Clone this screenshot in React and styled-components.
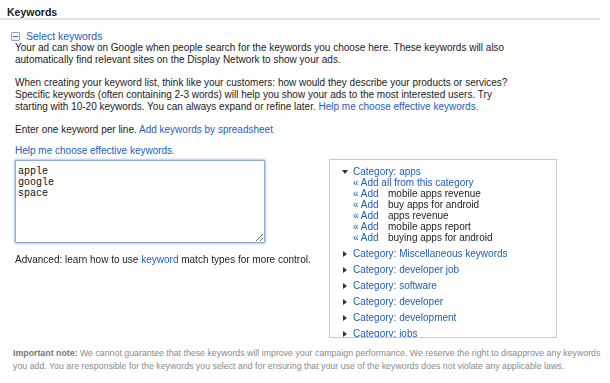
import React, { useEffect, useRef } from "react";
import styled, { createGlobalStyle } from "styled-components";

const GlobalStyle = createGlobalStyle`
  html, body {
    margin: 0;
    padding: 0;
    background: #ffffff;
  }
  body {
    font-family: "Liberation Sans", Arial, Helvetica, sans-serif;
    font-size: 10px;
    color: #222;
  }
`;

const Page = styled.div`
  width: 610px;
  height: 383px;
  overflow: hidden;
`;

const Header = styled.h2`
  width: 593px;
  margin: 0;
  padding: 7px 0 0 7px;
  font-size: 10.5px;
  line-height: 11px;
  font-weight: bold;
  color: #1a1a1a;
  border-bottom: 2px solid #e4e4e4;
`;

const Toggle = styled.div`
  display: flex;
  align-items: center;
  gap: 6px;
  margin: 10px 0 0 11px;
  line-height: 12px;
`;

const MinusBox = styled.span`
  position: relative;
  width: 7px;
  height: 7px;
  border: 1px solid #95a3b6;
  border-radius: 1px;
  background: linear-gradient(#fff, #e6ebf3);
  &:after {
    content: "";
    position: absolute;
    left: 1px;
    right: 1px;
    top: 3px;
    height: 1px;
    background: #506f9c;
  }
`;

const Link = styled.a`
  color: #1f5bc4;
  text-decoration: none;
  cursor: pointer;
  font-size: ${(p) => p.size || "inherit"};
`;

const Body = styled.div`
  padding-left: 15px;
`;

const Para = styled.p`
  width: 560px;
  margin: ${(p) => p.top || "11px"} 0 0;
  line-height: 12px;
`;

const Row = styled.div`
  display: flex;
  align-items: flex-start;
  margin-top: 2px;
`;

const LeftCol = styled.div`
  width: 314px;
  padding-top: 1px;
`;

const Box = styled.textarea`
  display: block;
  box-sizing: border-box;
  width: 250px;
  height: 83px;
  margin: 0;
  padding: 5px 2px;
  resize: both;
  font-family: "Liberation Mono", "Courier New", monospace;
  font-size: 10px;
  line-height: 11px;
  color: #111;
  border: 1px solid #8fa9d9;
  border-radius: 1px;
  box-shadow: 0 0 2px 1px #b3c8ee;
  outline: none;
`;

const Note = styled.div`
  margin-top: 11px;
  line-height: 12px;
`;

const Panel = styled.div`
  box-sizing: border-box;
  width: 228px;
  height: 179px;
  overflow: hidden;
  border: 1px solid #cacaca;
  padding: 6px 0 0 12px;
`;

const CatList = styled.ul`
  list-style: none;
  margin: 0;
  padding: 0;
`;

const Cat = styled.li`
  margin-bottom: 5px;
  line-height: 11px;
`;

const CatHead = styled.div`
  display: flex;
  align-items: center;
`;

const Arrow = styled.span`
  display: inline-block;
  width: 11px;
  flex: none;
  &:before {
    content: "";
    display: block;
    width: 0;
    height: 0;
    ${(p) =>
      p.open
        ? `border-left: 3px solid transparent;
           border-right: 3px solid transparent;
           border-top: 4px solid #333;`
        : `margin-left: 1px;
           border-top: 3px solid transparent;
           border-bottom: 3px solid transparent;
           border-left: 4px solid #333;`}
  }
`;

const SubList = styled.div`
  padding-left: 11px;
  line-height: 11px;
`;

const SubRow = styled.div`
  display: flex;
`;

const AddLink = styled(Link)`
  width: 35px;
  flex: none;
`;

const Footnote = styled.p`
  width: 597px;
  margin: 9px 0 0 13px;
  font-size: 8.8px;
  line-height: 13px;
  color: #8a8a8a;
  & b {
    color: #777;
  }
`;

const keywords = [
  "mobile apps revenue",
  "buy apps for android",
  "apps revenue",
  "mobile apps report",
  "buying apps for android",
];

const categories = [
  "Miscellaneous keywords",
  "developer job",
  "software",
  "developer",
  "development",
  "jobs",
];

export default function App() {
  const area = useRef();

  useEffect(() => {
    const el = area.current;
    if (el) {
      el.focus();
      el.setSelectionRange(el.value.length, el.value.length);
    }
  }, []);

  return (
    <Page>
      <GlobalStyle />
      <Header>Keywords</Header>
      <Toggle>
        <MinusBox />
        <Link size="10.5px">Select keywords</Link>
      </Toggle>
      <Body>
        <Para top="0">
          Your ad can show on Google when people search for the keywords you
          choose here. These keywords will also
          <br />
          automatically find relevant sites on the Display Network to show your
          ads.
        </Para>
        <Para>
          When creating your keyword list, think like your customers: how would
          they describe your products or services?
          <br />
          Specific keywords (often containing 2-3 words) will help you show your
          ads to the most interested users. Try
          <br />
          starting with 10-20 keywords. You can always expand or refine later.{" "}
          <Link>Help me choose effective keywords.</Link>
        </Para>
        <Para>
          Enter one keyword per line. <Link>Add keywords by spreadsheet</Link>
        </Para>
        <Para top="9px">
          <Link>Help me choose effective keywords.</Link>
        </Para>
        <Row>
          <LeftCol>
            <Box ref={area} defaultValue={"apple\ngoogle\nspace"} spellCheck={false} />
            <Note>
              Advanced: learn how to use <Link>keyword</Link> match types for
              more control.
            </Note>
          </LeftCol>
          <Panel>
            <CatList>
              <Cat>
                <CatHead>
                  <Arrow open />
                  <Link>Category: apps</Link>
                </CatHead>
                <SubList>
                  <Link>« Add all from this category</Link>
                  {keywords.map((k) => (
                    <SubRow key={k}>
                      <AddLink>« Add</AddLink>
                      <span>{k}</span>
                    </SubRow>
                  ))}
                </SubList>
              </Cat>
              {categories.map((c) => (
                <Cat key={c}>
                  <CatHead>
                    <Arrow />
                    <Link>Category: {c}</Link>
                  </CatHead>
                </Cat>
              ))}
            </CatList>
          </Panel>
        </Row>
      </Body>
      <Footnote>
        <b>Important note:</b> We cannot guarantee that these keywords will
        improve your campaign performance. We reserve the right to disapprove
        any keywords
        <br />
        you add. You are responsible for the keywords you select and for
        ensuring that your use of the keywords does not violate any applicable
        laws.
      </Footnote>
    </Page>
  );
}
